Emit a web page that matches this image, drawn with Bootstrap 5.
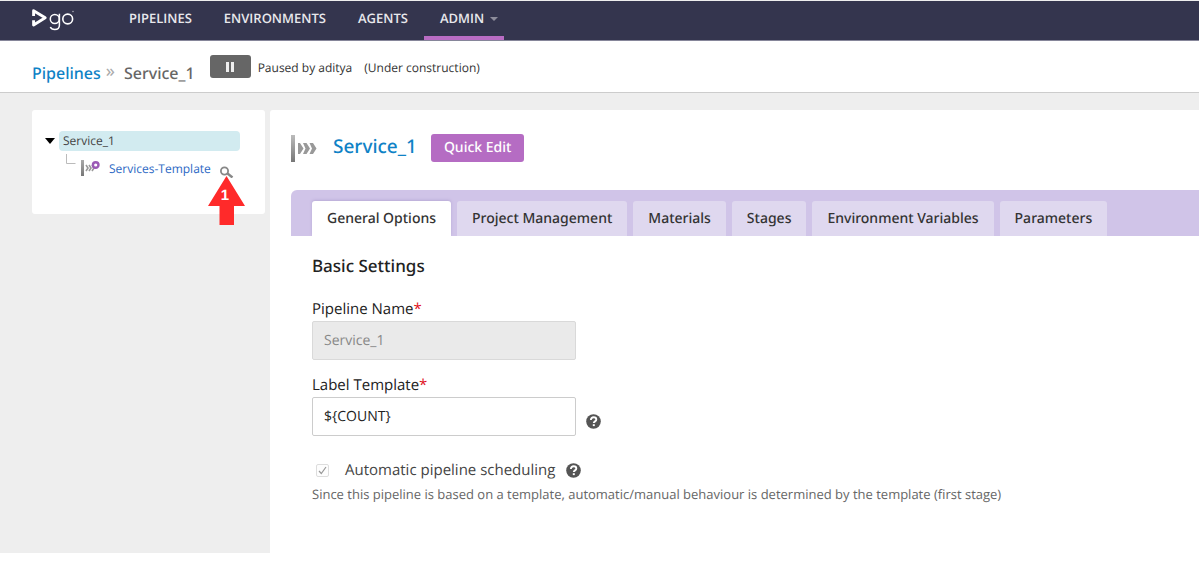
<!DOCTYPE html>
<html lang="en">
<head>
<meta charset="utf-8">
<meta name="viewport" content="width=device-width, initial-scale=1">
<title>Service_1 - Pipelines</title>
<link href="https://cdn.jsdelivr.net/npm/bootstrap@5.3.0/dist/css/bootstrap.min.css" rel="stylesheet">
<style>
  body { font-family: "Open Sans", "Noto Sans", sans-serif; color: #333; background: #fff; font-size: 12px; line-height: 18px; text-rendering: geometricPrecision; }
  button, input { text-rendering: inherit; }
  a { text-decoration: none; }
  .crumbs, .title-link, .btn-quick, .tab-strip, .pane h2 { font-family: "Noto Sans", "Open Sans", sans-serif; font-weight: 500; }
  .top-bar { background: #34354e; border-top: 1px solid #eee; border-bottom: 1px solid #86869a; height: 41px; padding: 0 32px; }
  .top-bar .navbar-nav { margin-left: 37px; }
  .top-bar .navbar-nav .nav-link { color: #e8e8ec; font-weight: 600; font-size: 13px; line-height: 18px; padding: 8px 16px 9px; border-bottom: 4px solid transparent; }
  .top-bar .navbar-nav .nav-link:hover { color: #fff; }
  .top-bar .navbar-nav .nav-link.active { color: #e8e8ec; border-bottom-color: #b86cc3; }
  .top-bar .navbar-nav .dropdown-toggle { padding-right: 6px; }
  .top-bar .dropdown-toggle::after { color: #8d8d9b; border-width: 4px 4px 0; margin-left: 6px; vertical-align: 2px; }
  .logo { margin-top: 7px; }
  .crumb-bar { height: 52px; padding: 0 32px; border-bottom: 1px solid #ccc; }
  .crumbs { font-size: 16px; line-height: 20px; padding-top: 12px; }
  .crumbs a, .title-link { color: #0f82c6; }
  .crumbs .sep { color: #aaa; font-size: 18px; line-height: 16px; margin: 0 9px 4px 5px; font-weight: 400; }
  .crumbs .here { color: #666; }
  .btn-pause { width: 41px; height: 23px; padding: 0; border: 0; border-radius: 3px; background: #666; margin-left: 15px; }
  .btn-pause:hover { background: #555; }
  .paused { margin: 2px 12px 0 7px; }
  .reason { margin-top: 2px; }
  .workspace { background: #eee; padding: 17px 0 0 32px; gap: 5px; }
  .side-card { width: 233px; height: 104px; border-radius: 3px; background: #fff; padding: 21px 25px 0 13px; }
  .tree-node { background: #d2ebf0; border-radius: 4px; padding: 1px 4px; color: #444; }
  .caret { width: 10px; height: 6px; }
  .tree-child { padding-left: 21px; margin-top: 3px; height: 28px; }
  .tree-child a { color: #2c68c4; }
  .tree-child .tpl { margin-top: 6px; }
  .marker { left: 208px; top: 176px; }
  .marker text { font: bold 15px "Liberation Sans", sans-serif; fill: #fff; }
  .editor { background: #fff; border-top-left-radius: 3px; min-height: 443px; padding: 24px 0 36px 21px; }
  .title-link { font-size: 19px; line-height: 24px; margin: 0 14px 4px 15px; }
  .btn-quick { background: #b56cc3; color: #fff; font-size: 14px; line-height: 18px; padding: 5px 13px; border: 0; border-radius: 3px; }
  .btn-quick:hover { background: #a45cb2; color: #fff; }
  .tab-strip { background: #d0c4e8; border-radius: 6px 0 0 0; margin-top: 28px; padding: 11px 21px 0; gap: 6px; border: 0; }
  .tab-strip .nav-link { color: #333; background: #dfd8ef; font-size: 14px; line-height: 20px; padding: 8px 15px 7px; border: 0; margin: 0; border-radius: 3px 3px 0 0; }
  .tab-strip .nav-link.active { color: #333; background: #fff; box-shadow: 0 -1px 3px #b8aad6; clip-path: inset(-4px -4px 0 -4px); }
  .pane { padding: 19px 21px 0; }
  .pane h2 { font-size: 17px; line-height: 22px; color: #222; margin: 0 0 22px; }
  .pane .form-label { font-size: 15px; line-height: 20px; margin: 0 0 2px; color: #222; display: block; }
  .req { color: #e0131e; }
  .field-next { margin-top: 15px; }
  .pane .form-control { width: 264px; height: 39px; font-size: 14px; border: 1px solid #ccc; border-radius: 2px; padding: 0 11px; color: #222; }
  .pane .form-control:disabled { background: #eaeaea; border-color: #d9d9d9; color: #888; }
  .help { background: none; border: 0; padding: 0; width: 15px; height: 15px; display: flex; }
  .field-next .help { margin: 10px 0 0 10px; }
  .auto-row { margin-top: 24px; }
  .auto-check { width: 13px; height: 13px; margin: 0 16px 0 4px; border: 1px solid #ddd; border-radius: 2px; appearance: none; background: #fdfdfd url("data:image/svg+xml,%3Csvg xmlns='http://www.w3.org/2000/svg' viewBox='0 0 11 11'%3E%3Cpath d='M2 6l2.3 2.5L9 2' fill='none' stroke='%23999' stroke-width='1.2'/%3E%3C/svg%3E") center/11px; }
  .auto-label { font-size: 15px; line-height: 20px; margin-right: 11px; color: #444; }
  .note { color: #666; font-size: 13px; margin: 5px 0 0; }
</style>
</head>
<body>
<nav class="navbar navbar-expand top-bar align-items-start">
  <a class="d-block" href="#" aria-label="Go">
    <svg class="logo d-block" width="44" height="24" viewBox="0 0 44 24" fill="none" stroke="#fff">
      <path d="M1.600 8V2.700L13.200 9.800 1.600 17V12.300" stroke-width="2.900" stroke-linejoin="round"/>
      <circle cx="22.800" cy="11" r="4.500" stroke-width="1.500"/>
      <path d="M27.400 5.800v11.400c0 3-1.700 4.300-4.600 4.300-2.200 0-3.800-.8-4.500-2.500" stroke-width="1.500"/>
      <circle cx="35.700" cy="11" r="4.900" stroke-width="1.600"/>
      <circle cx="41" cy="3.500" r=".500" stroke-width=".400"/>
    </svg>
  </a>
  <ul class="navbar-nav">
    <li class="nav-item"><a class="nav-link" href="#">PIPELINES</a></li>
    <li class="nav-item"><a class="nav-link" href="#">ENVIRONMENTS</a></li>
    <li class="nav-item"><a class="nav-link" href="#">AGENTS</a></li>
    <li class="nav-item"><a class="nav-link dropdown-toggle active" href="#" role="button">ADMIN</a></li>
  </ul>
</nav>

<header class="crumb-bar d-flex align-items-center">
  <div class="crumbs d-flex align-items-center">
    <a href="#">Pipelines</a><span class="sep">»</span><span class="here">Service_1</span>
  </div>
  <button class="btn-pause d-flex align-items-center justify-content-center" type="button" aria-label="Resume pipeline">
    <svg width="10" height="10" viewBox="0 0 10 10"><path d="M1 0h3v10H1zM6 0h3v10H6z" fill="#eee"/></svg>
  </button>
  <span class="paused">Paused by aditya</span>
  <span class="reason">(Under construction)</span>
</header>

<div class="workspace d-flex align-items-start">
  <aside class="side-card flex-shrink-0">
    <div class="d-flex align-items-center gap-1">
      <svg class="caret" viewBox="0 0 10 6"><path d="M0 0h10L5 6z" fill="#000"/></svg>
      <div class="tree-node flex-grow-1">Service_1</div>
    </div>
    <div class="tree-child d-flex align-items-start">
      <svg width="43" height="24" viewBox="0 0 43 24">
        <defs><linearGradient id="g1" x2="0" y2="1"><stop stop-color="#aaa"/><stop offset="1" stop-color="#777"/></linearGradient></defs>
        <path d="M.500 0v9.500h9" fill="none" stroke="#bbb"/>
        <path d="M15 6h3v16h-3z" fill="url(#g1)"/>
        <path d="M20 11l2 3-2 3M23 11l2 3-2 3M26 11l2 3-2 3" fill="none" stroke="#999" stroke-width="1.600"/>
        <circle cx="29.700" cy="11" r="2.800" fill="#fff" stroke="#9b5bb5" stroke-width="2.400"/>
      </svg>
      <a class="tpl" href="#">Services-Template</a>
      <a class="ms-auto" href="#" aria-label="View template">
        <svg width="20" height="24" viewBox="0 0 20 24" fill="none" stroke="#888"><circle cx="4.500" cy="17" r="3.600" stroke-width="1.800"/><path d="M7.500 19.500l5 4" stroke-width="2.400"/></svg>
      </a>
    </div>
  </aside>

  <main class="editor flex-grow-1">
    <div class="d-flex align-items-center">
      <svg width="27" height="27" viewBox="0 0 27 27">
        <defs><linearGradient id="g2" x2="0" y2="1"><stop stop-color="#bbb"/><stop offset="1" stop-color="#777"/></linearGradient></defs>
        <path d="M0 0h4v27H0z" fill="url(#g2)"/>
        <path d="M7 8h2l3.500 5.500L9 19H7zM12 8h3.500l3.500 5.500-3.500 5.500H12l2.500-5.500zM18.500 8H22l3.500 5.500L22 19h-3.500l2.500-5.500z" fill="#999"/>
      </svg>
      <a class="title-link" href="#">Service_1</a>
      <button class="btn btn-quick" type="button">Quick Edit</button>
    </div>
    <ul class="nav nav-tabs tab-strip">
      <li class="nav-item"><a class="nav-link active" href="#" aria-current="page">General Options</a></li>
      <li class="nav-item"><a class="nav-link" href="#">Project Management</a></li>
      <li class="nav-item"><a class="nav-link" href="#">Materials</a></li>
      <li class="nav-item"><a class="nav-link" href="#">Stages</a></li>
      <li class="nav-item"><a class="nav-link" href="#">Environment Variables</a></li>
      <li class="nav-item"><a class="nav-link" href="#">Parameters</a></li>
    </ul>
    <form class="pane">
      <h2>Basic Settings</h2>
      <label class="form-label" for="name">Pipeline Name<span class="req">*</span></label>
      <input class="form-control" id="name" type="text" value="Service_1" disabled>
      <div class="field-next">
        <label class="form-label" for="label">Label Template<span class="req">*</span></label>
        <div class="d-flex align-items-center">
          <input class="form-control" id="label" type="text" value="${COUNT}">
          <button class="help" type="button" aria-label="Label template help">
            <svg width="15" height="15" viewBox="0 0 15 15"><circle cx="7.500" cy="7.500" r="7.300" fill="#555"/><path d="M4.900 5.900C4.900 4.200 6 3.300 7.600 3.300s2.700.9 2.700 2.200c0 1.900-2.500 1.800-2.500 3.600" fill="none" stroke="#fff" stroke-width="1.900"/><path d="M6.800 10.200h2v1.900h-2z" fill="#fff"/></svg>
          </button>
        </div>
      </div>
      <div class="auto-row d-flex align-items-center">
        <input class="auto-check" id="auto" type="checkbox" checked disabled>
        <label class="auto-label" for="auto">Automatic pipeline scheduling</label>
        <button class="help" type="button" aria-label="Scheduling help">
          <svg width="15" height="15" viewBox="0 0 15 15"><circle cx="7.500" cy="7.500" r="7.300" fill="#555"/><path d="M4.900 5.900C4.900 4.200 6 3.300 7.600 3.300s2.700.9 2.700 2.200c0 1.900-2.500 1.800-2.500 3.600" fill="none" stroke="#fff" stroke-width="1.900"/><path d="M6.800 10.200h2v1.900h-2z" fill="#fff"/></svg>
        </button>
      </div>
      <p class="note">Since this pipeline is based on a template, automatic/manual behaviour is determined by the template (first stage)</p>
    </form>
  </main>
</div>

<svg class="marker position-absolute" width="37" height="49" viewBox="0 0 37 49" role="img" aria-label="Step 1">
  <path d="M18.500 0L37 30H26v19H11.500V30H0z" fill="#ff2a2a"/>
  <text x="17" y="24" text-anchor="middle">1</text>
</svg>
<script src="https://cdn.jsdelivr.net/npm/bootstrap@5.3.0/dist/js/bootstrap.bundle.min.js"></script>
</body>
</html>
